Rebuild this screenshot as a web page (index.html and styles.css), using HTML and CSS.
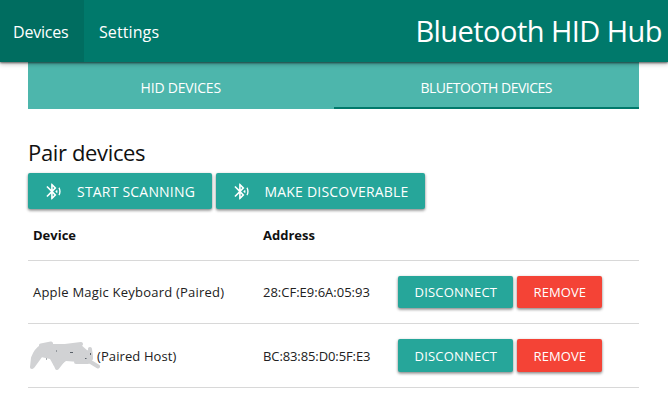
FILE: index.html
```html
<!DOCTYPE html>
<html lang="en">
<head>
<meta charset="utf-8">
<title>Bluetooth HID Hub</title>
<link rel="stylesheet" href="styles.css">
</head>
<body>
<svg class="sprite" aria-hidden="true">
  <symbol id="bluetooth" viewBox="0 0 24 24">
    <path d="M14.24 12.01l2.32 2.32c.28-.72.44-1.51.44-2.33 0-.82-.16-1.59-.43-2.31l-2.33 2.32zm5.29-5.3l-1.26 1.26c.63 1.21.98 2.57.98 4.02s-.36 2.82-.98 4.02l1.2 1.2c.97-1.54 1.54-3.36 1.54-5.31-.01-1.89-.55-3.67-1.48-5.19zm-3.82 1L10 2H9v7.59L4.41 5 3 6.41 8.59 12 3 17.59 4.41 19 9 14.41V22h1l5.71-5.71-4.3-4.29 4.3-4.29zM11 5.83l1.88 1.88L11 9.59V5.83zm1.88 10.46L11 18.17v-3.76l1.88 1.88z"/>
  </symbol>
</svg>
<nav class="navbar">
  <a class="nav-link active">Devices</a>
  <a class="nav-link">Settings</a>
  <span class="brand">Bluetooth HID Hub</span>
</nav>
<main class="container">
  <div class="tabs">
    <a class="tab">HID DEVICES</a>
    <a class="tab selected">BLUETOOTH DEVICES</a>
  </div>
  <h1 class="heading">Pair devices</h1>
  <div class="actions">
    <button class="btn large scan"><svg class="icon"><use href="#bluetooth"/></svg><span>START SCANNING</span></button>
    <button class="btn large discover"><svg class="icon"><use href="#bluetooth"/></svg><span>MAKE DISCOVERABLE</span></button>
  </div>
  <div class="row head"><span class="device">Device</span><span class="address">Address</span></div>
  <div class="row">
    <span class="device keyboard">Apple Magic Keyboard (Paired)</span>
    <span class="address">28:CF:E9:6A:05:93</span>
    <button class="btn disconnect">DISCONNECT</button><button class="btn remove">REMOVE</button>
  </div>
  <div class="row">
    <span class="device host"><svg class="scribble" viewBox="0 0 72 34">
      <path class="fill" d="M5 15Q9 8 13 7L24 6 40 8 52 5 60 12 64 12 65 20 62 24 51 23 38 22 30 28 26 27 22 20 13 18 7 24Z"/>
      <path class="stroke" d="M4 28L5 19Q8 11 13 8M13 6.500L23 4.500M24 7L13 16 5 27M24 17L29 29 36 20M25 7H37L53 5 46 10M20 15H55L61 20M53 12L62 14M62 10L63 19 60 23H48M61 22L70 27.500"/>
      <path class="speck" d="M18 20h1M28 12h1M42 13.500h3M57 19.500h1.500M62.500 14v2"/>
    </svg><span>(Paired Host)</span></span>
    <span class="address second">BC:83:85:D0:5F:E3</span>
    <button class="btn disconnect">DISCONNECT</button><button class="btn remove">REMOVE</button>
  </div>
</main>
</body>
</html>
```

FILE: styles.css
```css
* { box-sizing: border-box; }
body {
  margin: 0;
  overflow: hidden;
  background: #fff;
  color: #212121;
  font-family: "Open Sans", "Noto Sans", sans-serif;
  font-size: 13px;
}
.sprite { display: none; }
.navbar {
  position: relative;
  z-index: 1;
  display: flex;
  align-items: center;
  height: 62px;
  padding-right: 6px;
  background: #00796b;
  color: #fff;
  white-space: nowrap;
  box-shadow: 0 1px 2px rgba(0,0,0,.55), 0 2px 5px rgba(0,0,0,.25);
}
.nav-link {
  display: flex;
  align-items: center;
  height: 100%;
  padding: 1px 15px 0;
  font-size: 16px;
  letter-spacing: .1px;
}
.nav-link.active { width: 84px; padding-left: 13px; background: #006d60; letter-spacing: -.2px; }
.brand { margin-left: auto; padding-bottom: 1px; font-size: 29px; letter-spacing: -.55px; }
.container { width: 611px; margin-left: 28px; }
.tabs { display: flex; height: 47px; background: #4db6ac; }
.tab {
  display: flex;
  align-items: center;
  justify-content: center;
  width: 50%;
  padding-top: 4px;
  color: #fff;
  font-size: 14px;
  letter-spacing: -.2px;
}
.tab.selected { padding-top: 6px; border-bottom: 2px solid #00796b; letter-spacing: -.5px; }
.heading {
  height: 64px;
  margin: 0;
  padding-top: 27px;
  color: #111;
  font-size: 22px;
  font-weight: 400;
  letter-spacing: -.35px;
  line-height: 32px;
}
.actions { display: flex; gap: 3.500px; height: 36px; }
.btn {
  display: flex;
  align-items: center;
  justify-content: center;
  flex: none;
  height: 32.500px;
  padding: 0;
  border: 0;
  border-radius: 2px;
  background: #26a69a;
  color: #fff;
  font: 13px "Open Sans", "Noto Sans", sans-serif;
  letter-spacing: .2px;
  white-space: nowrap;
  box-shadow: 0 1px 3px rgba(0,0,0,.35), 0 2px 3px rgba(0,0,0,.2);
}
.btn.large { justify-content: flex-start; height: 36px; padding-left: 16px; font-size: 14px; }
.scan { width: 184px; }
.discover { width: 209px; }
.icon { width: 19px; height: 19px; margin-right: 14px; fill: #fff; }
.row {
  display: flex;
  align-items: center;
  height: 63px;
  padding-left: 5px;
  border-bottom: 1px solid #d8d8d8;
  white-space: nowrap;
}
.row:last-child { height: 64px; }
.row.head { height: 52px; padding-top: 1px; color: #111; font-weight: 700; }
.device { width: 230px; }
.keyboard { letter-spacing: .22px; }
.address { width: 135.400px; }
.second { letter-spacing: -.1px; }
.disconnect { width: 115px; margin-right: 4px; }
.remove { width: 85px; background: #f44336; letter-spacing: .1px; }
.host { display: flex; align-items: center; letter-spacing: .1px; }
.scribble { width: 72px; height: 34px; margin: 0 -3px 0 -5px; }
.fill { fill: #d1d2d4; }
.stroke { fill: none; stroke: #d1d2d4; stroke-width: 4; stroke-linecap: round; stroke-linejoin: round; }
.speck { fill: none; stroke: #596068; }
```
